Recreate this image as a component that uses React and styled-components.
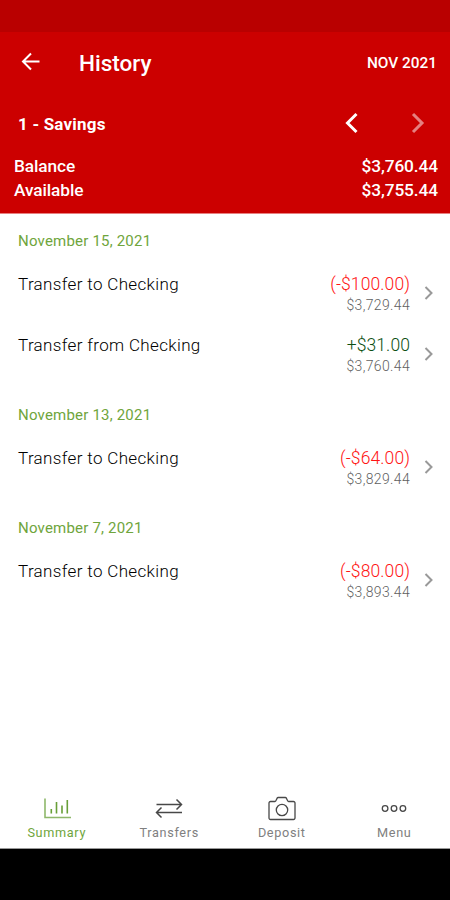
import React from 'react';
import styled, { createGlobalStyle } from 'styled-components';

const GlobalStyle = createGlobalStyle`
  * {
    box-sizing: border-box;
  }

  body {
    margin: 0;
    background: #fff;
    font-family: Roboto, "Liberation Sans", sans-serif;
  }
`;

const Screen = styled.div`
  display: flex;
  flex-direction: column;
  width: 450px;
  height: 900px;
  background: #fff;
  overflow: hidden;
`;

const StatusBar = styled.div`
  height: 32px;
  background: #b90000;
`;

const Header = styled.header`
  height: 182px;
  background: #cc0000;
  border-bottom: 1px solid #e88080;
  color: #fff;
`;

const TitleBar = styled.div`
  display: flex;
  align-items: center;
  height: 60px;
  padding: 0 13px 0 18px;
`;

const IconButton = styled.button`
  display: flex;
  padding: 0;
  border: 0;
  background: none;
  color: inherit;
  opacity: ${(props) => (props.$dim ? 0.5 : 1)};
`;

const Title = styled.h1`
  flex: 1;
  margin: 1px 0 0 37px;
  font-size: 22.5px;
  font-weight: 500;
`;

const Month = styled.span`
  padding-top: 1px;
  font-size: 15.4px;
  font-weight: 500;
`;

const AccountBar = styled.div`
  display: flex;
  align-items: center;
  justify-content: space-between;
  height: 62px;
  padding: 0 19px 0 18px;
`;

const AccountName = styled.span`
  padding-top: 1px;
  font-size: 17px;
  font-weight: 700;
  letter-spacing: 0.2px;
`;

const Arrows = styled.div`
  display: flex;
  gap: 40px;
`;

const BalanceRow = styled.div`
  display: flex;
  justify-content: space-between;
  padding: 0 12px 0 14px;
  font-size: 17.3px;
  font-weight: 500;
  line-height: 24px;
  letter-spacing: -0.1px;
`;

const History = styled.main`
  flex: 1;
`;

const DateLabel = styled.h2`
  height: 52.5px;
  margin: 0;
  padding: 17px 18px 0;
  color: #6fa53c;
  font-size: 15px;
  font-weight: 400;
  line-height: 20px;
  letter-spacing: 0.2px;
`;

const Transaction = styled.div`
  display: flex;
  height: 60.5px;
  padding: 5.5px 14px 0 18px;
`;

const Description = styled.span`
  flex: 1;
  color: #000;
  font-size: 17px;
  font-weight: 300;
  line-height: 24px;
  letter-spacing: 0.35px;
`;

const Figures = styled.div`
  text-align: right;
`;

const Amount = styled.div`
  color: ${(props) => (props.$credit ? '#0b4f12' : '#ff1414')};
  font-size: 17.5px;
  font-weight: 300;
  line-height: 24px;
  letter-spacing: 0.1px;
`;

const RunningBalance = styled.div`
  color: #5f5f5f;
  font-size: 14px;
  line-height: 18px;
  font-weight: 300;
  letter-spacing: 0.35px;
`;

const Chevron = styled.svg`
  margin: 13px 0 0 11px;
  width: 15px;
  height: 15px;
`;

const NavBar = styled.nav`
  display: grid;
  grid-template-columns: repeat(4, 1fr);
  height: 55px;
  border-bottom: 1px solid #999;
`;

const NavItem = styled.a`
  display: flex;
  flex-direction: column;
  align-items: center;
  padding-left: 1px;
  color: ${(props) => (props.$active ? '#6fa53c' : '#808080')};
  font-size: 12.7px;
  line-height: 18px;
  letter-spacing: 0.65px;
`;

const NavIcon = styled.svg`
  width: 30px;
  height: 28px;
  margin-bottom: 2px;
  fill: none;
  stroke: ${(props) => (props.$active ? '#689f38' : '#484848')};
  stroke-width: 1.3;
`;

const SystemBar = styled.div`
  height: 51px;
  background: #000;
`;

const groups = [
  {
    date: 'November 15, 2021',
    items: [
      { text: 'Transfer to Checking', amount: '(-$100.00)', balance: '$3,729.44' },
      { text: 'Transfer from Checking', amount: '+$31.00', balance: '$3,760.44', credit: true },
    ],
  },
  {
    date: 'November 13, 2021',
    items: [{ text: 'Transfer to Checking', amount: '(-$64.00)', balance: '$3,829.44' }],
  },
  {
    date: 'November 7, 2021',
    items: [{ text: 'Transfer to Checking', amount: '(-$80.00)', balance: '$3,893.44' }],
  },
];

const navItems = [
  {
    label: 'Summary',
    active: true,
    icon: (
      <>
        <path d="M3 4.500V23.500H29" strokeOpacity="0.75" strokeWidth="1.600" />
        <path d="M9.300 19.500v-4.500M14.500 19.500V8M20 19.500V11.500M25.300 19.500V6" strokeWidth="1.600" />
      </>
    ),
  },
  {
    label: 'Transfers',
    icon: <path d="M2.500 10.500H27M22.500 5.500l5 5-5 5M28 18.500H3M7.500 13.500l-5 5 5 5" strokeWidth="1.500" />,
  },
  {
    label: 'Deposit',
    icon: (
      <>
        <path d="M3.500 7.500H8c1.500 0 1.500-4 3-4h7.500c1.500 0 1.500 4 3 4h5a1.500 1.500 0 0 1 1.500 1.500v15a1.500 1.500 0 0 1-1.500 1.500h-23A1.500 1.500 0 0 1 2 24V9a1.500 1.500 0 0 1 1.500-1.500z" />
        <circle cx="15" cy="16" r="5.700" />
      </>
    ),
  },
  {
    label: 'Menu',
    icon: (
      <>
        <circle cx="6.100" cy="14.500" r="2.800" />
        <circle cx="15" cy="14.500" r="2.800" />
        <circle cx="23.900" cy="14.500" r="2.800" />
      </>
    ),
  },
];

const App = () => (
  <Screen>
    <GlobalStyle />
    <StatusBar />
    <Header>
      <TitleBar>
        <IconButton aria-label="Back">
          <svg width="24" height="24" fill="none" stroke="currentColor" strokeWidth="2">
            <path d="M21.500 11.500H4.500M13 3.500l-8 8 8 8" />
          </svg>
        </IconButton>
        <Title>History</Title>
        <Month>NOV 2021</Month>
      </TitleBar>
      <AccountBar>
        <AccountName>1 - Savings</AccountName>
        <Arrows>
          <IconButton aria-label="Previous account">
            <svg width="26" height="24" fill="none" stroke="currentColor" strokeWidth="3">
              <path d="M17.500 3l-9 9 9 9" />
            </svg>
          </IconButton>
          <IconButton aria-label="Next account" $dim>
            <svg width="26" height="24" fill="none" stroke="currentColor" strokeWidth="3">
              <path d="M8 3l9 9-9 9" />
            </svg>
          </IconButton>
        </Arrows>
      </AccountBar>
      <BalanceRow>
        <span>Balance</span>
        <span>$3,760.44</span>
      </BalanceRow>
      <BalanceRow>
        <span>Available</span>
        <span>$3,755.44</span>
      </BalanceRow>
    </Header>

    {/* Transactions grouped by day */}
    <History>
      {groups.map((group) => (
        <section key={group.date}>
          <DateLabel>{group.date}</DateLabel>
          {group.items.map((item) => (
            <Transaction key={item.balance}>
              <Description>{item.text}</Description>
              <Figures>
                <Amount $credit={item.credit}>{item.amount}</Amount>
                <RunningBalance>{item.balance}</RunningBalance>
              </Figures>
              <Chevron fill="none" stroke="#999" strokeWidth="2">
                <path d="M4.500 2l6 6-6 6" />
              </Chevron>
            </Transaction>
          ))}
        </section>
      ))}
    </History>

    <NavBar>
      {navItems.map((item) => (
        <NavItem key={item.label} $active={item.active}>
          <NavIcon $active={item.active}>{item.icon}</NavIcon>
          {item.label}
        </NavItem>
      ))}
    </NavBar>
    <SystemBar />
  </Screen>
);

export default App;
